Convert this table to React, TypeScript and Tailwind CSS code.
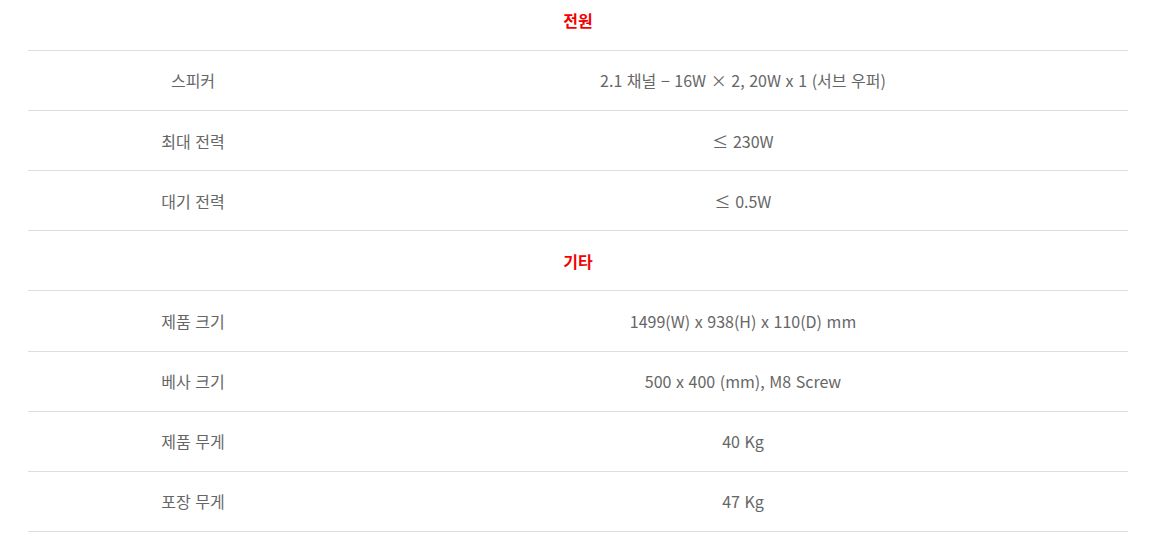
import React from "react";

type Row = { type: "head"; title: string } | { type: "row"; label: string; value: string };

const rows: Row[] = [
  { type: "head", title: "전원" },
  { type: "row", label: "스피커", value: "2.1 채널 − 16W × 2, 20W x 1 (서브 우퍼)" },
  { type: "row", label: "최대 전력", value: "≤ 230W" },
  { type: "row", label: "대기 전력", value: "≤ 0.5W" },
  { type: "head", title: "기타" },
  { type: "row", label: "제품 크기", value: "1499(W) x 938(H) x 110(D) mm" },
  { type: "row", label: "베사 크기", value: "500 x 400 (mm), M8 Screw" },
  { type: "row", label: "제품 무게", value: "40 Kg" },
  { type: "row", label: "포장 무게", value: "47 Kg" },
];

export default function App() {
  return (
    <div
      className="w-[1149px] h-[542px] overflow-hidden bg-white"
      style={{ fontFamily: '"Noto Sans CJK KR", "Noto Sans", sans-serif' }}
    >
      <div className="mx-[28px] w-[1100px] -mt-[9.3px]">
        {rows.map((r, i) =>
          r.type === "head" ? (
            <div
              key={i}
              className="h-[60.15px] flex items-center justify-center border-b border-[#dddddd] text-[16px] font-bold text-[#f50000]"
            >
              {r.title}
            </div>
          ) : (
            <div
              key={i}
              className="h-[60.15px] flex items-center border-b border-[#dddddd] text-[16px] text-[#666666] [word-spacing:1px]"
            >
              <div className="w-[30%] text-center">{r.label}</div>
              <div className="w-[70%] text-center">{r.value}</div>
            </div>
          )
        )}
      </div>
    </div>
  );
}
